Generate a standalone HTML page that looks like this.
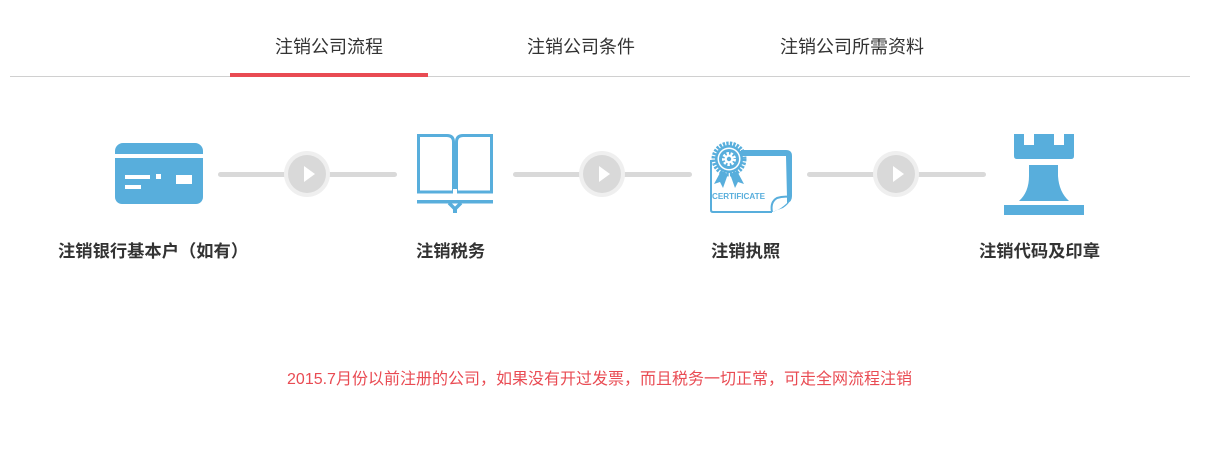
<!DOCTYPE html>
<html><head><meta charset="utf-8"><style>
body{margin:0;width:1217px;height:469px;background:#fff;position:relative;overflow:hidden;font-family:"Liberation Sans","Noto Sans CJK SC",sans-serif}
.a{position:absolute}
.tab{position:absolute;top:35px;font-size:18px;color:#333;line-height:24px;white-space:nowrap}
.lbl{position:absolute;top:239px;font-size:17.3px;font-weight:bold;color:#333;line-height:24px;white-space:nowrap}
.line{position:absolute;top:172px;height:5px;width:179px;background:#d9d9d9;border-radius:3px}
.cir{position:absolute;top:151px;width:46px;height:46px;border-radius:50%;background:#efefef}
.cir i{position:absolute;left:4px;top:4px;width:38px;height:38px;border-radius:50%;background:#d9d9d9}
.cir b{position:absolute;left:20px;top:15px;width:0;height:0;border-left:11px solid #fff;border-top:8px solid transparent;border-bottom:8px solid transparent}
</style></head><body>
<div class="tab" style="left:275px">注销公司流程</div>
<div class="tab" style="left:527px">注销公司条件</div>
<div class="tab" style="left:780px">注销公司所需资料</div>
<div class="a" style="left:10px;top:76px;width:1180px;height:1px;background:#d0d0d0"></div>
<div class="a" style="left:230px;top:73px;width:198px;height:4px;background:#e94b53"></div>

<!-- card -->
<svg class="a" style="left:115px;top:143px" width="88" height="62" viewBox="0 0 88 62">
<path d="M8 0H80A8 8 0 0 1 88 8V11H0V8A8 8 0 0 1 8 0Z" fill="#58aedc"/>
<path d="M0 15H88V54A7 7 0 0 1 81 61H7A7 7 0 0 1 0 54Z" fill="#58aedc"/>
<rect x="10" y="32" width="25" height="4" fill="#fff"/>
<rect x="41" y="31" width="5" height="5" fill="#fff"/>
<rect x="61" y="32" width="16" height="9" fill="#fff"/>
<rect x="10" y="42" width="16" height="4" fill="#fff"/>
</svg>
<div class="line" style="left:218px"></div>
<div class="cir" style="left:284px"><i></i><b></b></div>

<!-- book -->
<svg class="a" style="left:416px;top:133px" width="78" height="82" viewBox="0 0 78 82">
<path d="M2.5 2.5H31Q37.5 2.5 37.5 9V59H2.5Z" fill="none" stroke="#58aedc" stroke-width="3"/>
<path d="M75.5 2.5H47Q40.5 2.5 40.5 9V59H75.5Z" fill="none" stroke="#58aedc" stroke-width="3"/>
<rect x="37" y="56" width="4" height="6" fill="#fff"/>
<rect x="1" y="67" width="76" height="3.5" fill="#58aedc"/>
<path d="M33 70L39 76L45 70" fill="none" stroke="#58aedc" stroke-width="3.5"/>
<rect x="37" y="74" width="4" height="6" fill="#58aedc"/>
</svg>
<div class="line" style="left:513px"></div>
<div class="cir" style="left:579px"><i></i><b></b></div>

<!-- certificate -->
<svg class="a" style="left:703px;top:136px" width="94" height="78" viewBox="0 0 94 78">
<path d="M38 14H83Q89 14 89 20V60Q89 66 84 67V61Q83 20 83 20H38Z" fill="#58aedc"/>
<path d="M8 24V74Q8 76 10 76H69" fill="none" stroke="#58aedc" stroke-width="2"/>
<path d="M69 76Q67 66 74 62Q80 60 88 61" fill="none" stroke="#58aedc" stroke-width="2"/>
<path d="M69 76Q78 74 88 63Q86 68 80 72Z" fill="#58aedc"/>
<circle cx="26" cy="23" r="15" fill="none" stroke="#58aedc" stroke-width="5" stroke-dasharray="2.2 1.2"/>
<circle cx="26" cy="23" r="14" fill="#58aedc"/>
<circle cx="26" cy="23" r="11.5" fill="#fff"/>
<circle cx="26" cy="23" r="10" fill="#58aedc"/>
<circle cx="26" cy="23" r="5.5" fill="none" stroke="#fff" stroke-width="3" stroke-dasharray="2.3 1.6"/>
<circle cx="26" cy="23" r="4.5" fill="#fff"/>
<circle cx="26" cy="23" r="2.2" fill="#58aedc"/>
<path d="M18 35L11 48L17 46L20 52L25 38Z M34 35L41 48L35 46L32 52L27 38Z" fill="#58aedc"/>
<text x="9" y="63" font-family="Liberation Sans,sans-serif" font-size="8" font-weight="bold" fill="#58aedc" textLength="53" lengthAdjust="spacingAndGlyphs">CERTIFICATE</text>
</svg>
<div class="line" style="left:807px"></div>
<div class="cir" style="left:873px"><i></i><b></b></div>

<!-- rook -->
<svg class="a" style="left:1004px;top:134px" width="81" height="81" viewBox="0 0 81 81">
<path d="M10 0H20V11H30V0H50V11H60V0H70V22Q70 25 67 25H13Q10 25 10 22Z" fill="#58aedc"/>
<path d="M25 31H54V42Q55 58 65 67H15Q25 58 25 42Z" fill="#58aedc"/>
<rect x="0" y="71" width="80" height="10" fill="#58aedc"/>
</svg>

<div class="lbl" style="left:58px">注销银行基本户（如有）</div>
<div class="lbl" style="left:416px">注销税务</div>
<div class="lbl" style="left:711px">注销执照</div>
<div class="lbl" style="left:979px">注销代码及印章</div>

<div class="a" style="left:0;width:1199px;top:369px;text-align:center;font-size:16px;color:#e94b53;line-height:22px;white-space:nowrap">2015.7月份以前注册的公司，如果没有开过发票，而且税务一切正常，可走全网流程注销</div>
</body></html>
